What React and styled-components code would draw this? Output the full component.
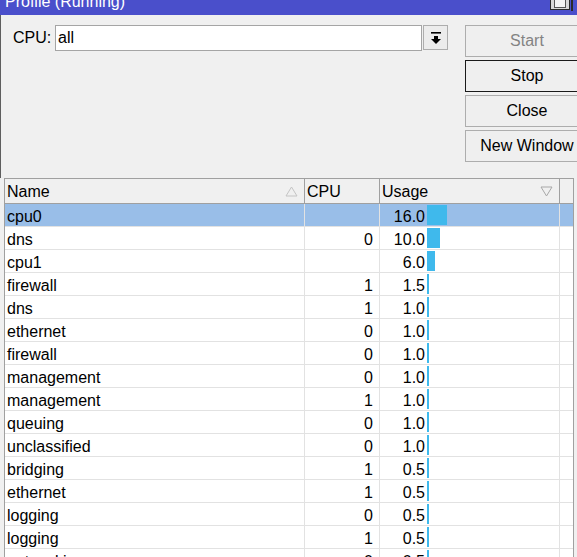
import React from 'react';
import styled, { createGlobalStyle } from 'styled-components';

const rows = [
  { name: 'cpu0', cpu: '', usage: 16.0, selected: true },
  { name: 'dns', cpu: '0', usage: 10.0 },
  { name: 'cpu1', cpu: '', usage: 6.0 },
  { name: 'firewall', cpu: '1', usage: 1.5 },
  { name: 'dns', cpu: '1', usage: 1.0 },
  { name: 'ethernet', cpu: '0', usage: 1.0 },
  { name: 'firewall', cpu: '0', usage: 1.0 },
  { name: 'management', cpu: '0', usage: 1.0 },
  { name: 'management', cpu: '1', usage: 1.0 },
  { name: 'queuing', cpu: '0', usage: 1.0 },
  { name: 'unclassified', cpu: '0', usage: 1.0 },
  { name: 'bridging', cpu: '1', usage: 0.5 },
  { name: 'ethernet', cpu: '1', usage: 0.5 },
  { name: 'logging', cpu: '0', usage: 0.5 },
  { name: 'logging', cpu: '1', usage: 0.5 },
  { name: 'networking', cpu: '0', usage: 0.5 },
];

const barWidth = v => Math.max(2, Math.round(v * 1.25));

const SortUp = () => (
  <svg width="13" height="11" viewBox="0 0 13 11">
    <path d="M6.5 1 L12 10 L1 10 Z" fill="none" stroke="#c4c4c4" strokeWidth="1" />
  </svg>
);

const SortDown = () => (
  <svg width="13" height="11" viewBox="0 0 13 11">
    <path d="M1 1 L12 1 L6.5 10 Z" fill="none" stroke="#a8a8a8" strokeWidth="1" />
  </svg>
);

const DropIcon = () => (
  <svg width="12" height="14" viewBox="0 0 12 14">
    <rect x="1" y="1" width="10" height="1.6" fill="#000" />
    <rect x="4" y="5" width="4" height="3" fill="#000" />
    <path d="M1 8 L11 8 L6 13 Z" fill="#000" />
  </svg>
);

const App = () => {
  return (
    <>
      <GlobalStyle />
      <Window>
        <TitleBar>
          <TitleText>Profile (Running)</TitleText>
          <TitleControls>
            <TitleButton>
              <TitleInner />
            </TitleButton>
            <TitleEdge />
          </TitleControls>
        </TitleBar>
        <Top>
          <FieldRow>
            <Label>CPU:</Label>
            <Input>all</Input>
            <DropButton>
              <DropIcon />
            </DropButton>
          </FieldRow>
          <Buttons>
            <Button disabledLook>Start</Button>
            <Button focused>Stop</Button>
            <Button>Close</Button>
            <Button>New Window</Button>
          </Buttons>
        </Top>
        <Table>
          <HeadCell>
            <span>Name</span>
            <SortUp />
          </HeadCell>
          <HeadCell>
            <span>CPU</span>
          </HeadCell>
          <HeadCell>
            <span>Usage</span>
            <SortDown />
          </HeadCell>
          <HeadCell last />
          {rows.map((r, i) => (
            <Row key={i} selected={r.selected}>
              <Cell>{r.name}</Cell>
              <Cell align="right">{r.cpu}</Cell>
              <UsageCell>
                <UsageValue>{r.usage.toFixed(1)}</UsageValue>
                <Bar style={{ width: barWidth(r.usage) }} />
              </UsageCell>
              <Cell last />
            </Row>
          ))}
        </Table>
      </Window>
    </>
  );
};

export default App;

const GlobalStyle = createGlobalStyle`
  html, body {
    margin: 0;
    padding: 0;
    background: #f0f0f0;
    overflow: hidden;
  }
  body {
    font-family: "Liberation Sans", Arial, sans-serif;
    font-size: 16px;
    color: #000;
  }
`;

const Window = styled.div`
  width: 577px;
  height: 557px;
  display: flex;
  flex-direction: column;
  background: #f0f0f0;
  overflow: hidden;
  box-sizing: border-box;
`;

const TitleBar = styled.div`
  height: 15px;
  flex: 0 0 15px;
  background: #4a4fcb;
  display: flex;
  justify-content: space-between;
  align-items: flex-start;
  overflow: hidden;
`;

const TitleText = styled.div`
  color: #fff;
  font-size: 16px;
  line-height: 18px;
  margin-top: -7px;
  padding-left: 5px;
  white-space: nowrap;
`;

const TitleControls = styled.div`
  display: flex;
  align-items: flex-start;
`;

const TitleButton = styled.div`
  width: 20px;
  height: 11px;
  margin-top: -1px;
  box-sizing: border-box;
  border: 1px solid #2a2a2a;
  background: #d8d8d8;
  display: flex;
  justify-content: center;
`;

const TitleInner = styled.div`
  width: 12px;
  height: 8px;
  box-sizing: border-box;
  border: 1px solid #555;
  border-top: none;
  background: #f4f4f4;
`;

const TitleEdge = styled.div`
  width: 2px;
  height: 11px;
  margin-left: 1px;
  margin-right: 4px;
  background: #2a2a2a;
`;

const Top = styled.div`
  flex: 0 0 163px;
  height: 163px;
  box-sizing: border-box;
  display: flex;
  justify-content: flex-start;
  padding: 10px 0 0 0;
  border-left: 1px solid #5e5e5e;
`;

const FieldRow = styled.div`
  display: flex;
  align-items: flex-start;
  padding-left: 12px;
  margin-right: 17px;
`;

const Label = styled.div`
  width: 42px;
  height: 26px;
  line-height: 26px;
`;

const Input = styled.div`
  width: 367px;
  height: 26px;
  box-sizing: border-box;
  background: #fff;
  border: 1px solid #a5a5a5;
  padding-left: 2px;
  line-height: 24px;
`;

const DropButton = styled.div`
  width: 25px;
  height: 25px;
  margin-left: 1px;
  box-sizing: border-box;
  border: 1px solid #adadad;
  background: #ececec;
  display: flex;
  align-items: center;
  justify-content: center;
`;

const Buttons = styled.div`
  display: flex;
  flex-direction: column;
  gap: 3px;
  flex: 0 0 auto;
`;

const Button = styled.div`
  width: 124px;
  height: 32px;
  box-sizing: border-box;
  border: 1px solid ${p => (p.focused ? '#1a1a1a' : '#adadad')};
  background: #efefef;
  color: ${p => (p.disabledLook ? '#838383' : '#000')};
  display: flex;
  align-items: center;
  justify-content: center;
  white-space: nowrap;
`;

const Table = styled.div`
  margin-left: 4px;
  width: 570px;
  box-sizing: border-box;
  display: grid;
  grid-template-columns: 300px 75px 180px 13px;
  grid-template-rows: 25px;
  grid-auto-rows: 23px;
  border-left: 1px solid #a0a0a0;
  border-right: 1px solid #a0a0a0;
  border-top: 1px solid #a0a0a0;
  background: #fff;
`;

const HeadCell = styled.div`
  height: 25px;
  box-sizing: border-box;
  background: #f0f0f0;
  border-right: ${p => (p.last ? 'none' : '1px solid #a0a0a0')};
  border-bottom: 1px solid #a0a0a0;
  display: flex;
  align-items: center;
  justify-content: space-between;
  padding: 1px 6px 0 2px;
  white-space: nowrap;
`;

const Row = styled.div`
  display: contents;
  & > div {
    background: ${p => (p.selected ? '#99bee8' : '#fff')};
  }
`;

const Cell = styled.div`
  height: 23px;
  box-sizing: border-box;
  border-right: ${p => (p.last ? 'none' : '1px solid #e2e2e2')};
  border-bottom: 1px solid #e2e2e2;
  line-height: 22px;
  padding: ${p => (p.align === 'right' ? '2px 6px 0 2px' : '2px 2px 0')};
  text-align: ${p => p.align || 'left'};
  white-space: nowrap;
`;

const UsageCell = styled(Cell)`
  display: flex;
  align-items: flex-start;
  padding: 0;
`;

const UsageValue = styled.span`
  width: 45px;
  margin-top: 2px;
  line-height: 22px;
  text-align: right;
  margin-right: 2px;
`;

const Bar = styled.div`
  height: 20px;
  margin-top: 1px;
  background: #3fb9ec;
`;
